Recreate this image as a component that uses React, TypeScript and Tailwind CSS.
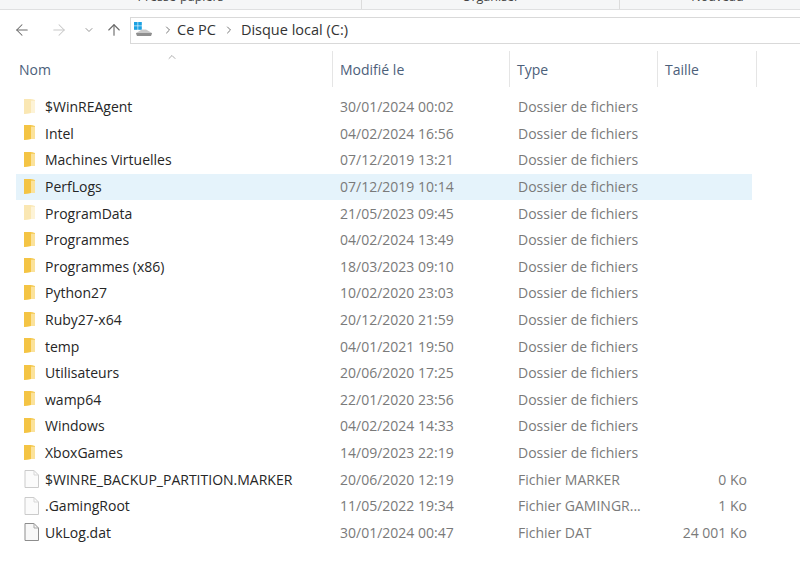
import React from 'react';
import { ArrowLeft, ArrowRight, ArrowUp, ChevronDown, ChevronRight, ChevronUp } from 'lucide-react';

type Row = { name: string; date: string; type: string; size?: string; faded?: boolean; selected?: boolean; file?: boolean };

const rows: Row[] = [
  { name: '$WinREAgent', date: '30/01/2024 00:02', type: 'Dossier de fichiers', faded: true },
  { name: 'Intel', date: '04/02/2024 16:56', type: 'Dossier de fichiers' },
  { name: 'Machines Virtuelles', date: '07/12/2019 13:21', type: 'Dossier de fichiers' },
  { name: 'PerfLogs', date: '07/12/2019 10:14', type: 'Dossier de fichiers', selected: true },
  { name: 'ProgramData', date: '21/05/2023 09:45', type: 'Dossier de fichiers', faded: true },
  { name: 'Programmes', date: '04/02/2024 13:49', type: 'Dossier de fichiers' },
  { name: 'Programmes (x86)', date: '18/03/2023 09:10', type: 'Dossier de fichiers' },
  { name: 'Python27', date: '10/02/2020 23:03', type: 'Dossier de fichiers' },
  { name: 'Ruby27-x64', date: '20/12/2020 21:59', type: 'Dossier de fichiers' },
  { name: 'temp', date: '04/01/2021 19:50', type: 'Dossier de fichiers' },
  { name: 'Utilisateurs', date: '20/06/2020 17:25', type: 'Dossier de fichiers' },
  { name: 'wamp64', date: '22/01/2020 23:56', type: 'Dossier de fichiers' },
  { name: 'Windows', date: '04/02/2024 14:33', type: 'Dossier de fichiers' },
  { name: 'XboxGames', date: '14/09/2023 22:19', type: 'Dossier de fichiers' },
  { name: '$WINRE_BACKUP_PARTITION.MARKER', date: '20/06/2020 12:19', type: 'Fichier MARKER', size: '0 Ko', file: true, faded: true },
  { name: '.GamingRoot', date: '11/05/2022 19:34', type: 'Fichier GAMINGR...', size: '1 Ko', file: true, faded: true },
  { name: 'UkLog.dat', date: '30/01/2024 00:47', type: 'Fichier DAT', size: '24 001 Ko', file: true },
];

const FolderIcon = ({ faded }: { faded?: boolean }) => (
  <svg width="12" height="16" viewBox="0 0 12 16" className={faded ? 'opacity-40' : ''}>
    <path d="M0 0 H8 L11 1 V14 H7 L0 15 Z" fill="#f6cf63" />
    <path d="M0 0 H7 V14 L0 15 Z" fill="#f4c444" />
    <path d="M7 2 H11 V14 H7 Z" fill="#fbe29a" />
  </svg>
);

const FileIcon = ({ faded }: { faded?: boolean }) => (
  <svg width="15" height="18" viewBox="0 0 15 18" className={faded ? 'opacity-45' : ''}>
    <path d="M1 .5 H10 L14.5 5 V17.5 H1 Z" fill="#f8f8f8" stroke="#8d8d8d" />
    <path d="M10 .5 V5 H14.5" fill="none" stroke="#a8a8a8" />
  </svg>
);

const DriveIcon = () => (
  <svg width="20" height="18" viewBox="0 0 20 18">
    <rect x="1" y="1" width="3.6" height="3.6" fill="#1ba1e2" />
    <rect x="5.2" y="1" width="3.6" height="3.6" fill="#1ba1e2" />
    <rect x="1" y="5.2" width="3.6" height="3.6" fill="#1ba1e2" />
    <rect x="5.2" y="5.2" width="3.6" height="3.6" fill="#1ba1e2" />
    <path d="M3 12 L9 8.5 H13 L19 12 L18 15 H4 Z" fill="#c9c9c9" />
    <path d="M3 12 H19 L18 15 H4 Z" fill="#8f8f8f" />
  </svg>
);

const HeaderCell = ({ label, width, className = '' }: { label: string; width: string; className?: string }) => (
  <div className={`${width} h-[36px] border-r border-[#e5e5e5] flex items-center text-[14px] text-[#4c607a] ${className}`}>{label}</div>
);

export default function App() {
  return (
    <div className="w-[800px] h-[575px] bg-white overflow-hidden text-[14px]" style={{ fontFamily: '"Open Sans", "Liberation Sans", sans-serif' }}>
      <div className="h-[10px] bg-[#f5f6f7] border-b border-[#dfe0e1] overflow-hidden flex text-[12.5px] text-[#444]">
        <div className="w-[362px] shrink-0 border-r border-[#dcdcdc] flex justify-center"><span className="-mt-[12px] leading-[18px]">Presse-papiers</span></div>
        <div className="w-[258px] shrink-0 border-r border-[#dcdcdc] flex justify-center"><span className="-mt-[12px] leading-[18px]">Organiser</span></div>
        <div className="w-[195px] shrink-0 flex justify-center"><span className="-mt-[12px] leading-[18px]">Nouveau</span></div>
      </div>

      <div className="h-[40px] flex items-center">
        <div className="w-[130px] flex items-center pl-[13px]">
          <ArrowLeft size={18} strokeWidth={1.4} color="#6a6a6a" />
          <ArrowRight size={18} strokeWidth={1.4} color="#c8c8c8" className="ml-[19px]" />
          <ChevronDown size={12} strokeWidth={1.6} color="#7a7a7a" className="ml-[15px]" />
          <ArrowUp size={18} strokeWidth={1.5} color="#6a6a6a" className="ml-[10px]" />
        </div>
        <div className="flex-1 h-[27px] border border-[#d9d9d9] border-r-0 flex items-center pl-[2px] text-[14.5px] text-[#333]">
          <DriveIcon />
          <ChevronRight size={12} strokeWidth={2} color="#777" className="ml-[9px]" />
          <span className="ml-[3px]">Ce PC</span>
          <ChevronRight size={12} strokeWidth={2} color="#777" className="ml-[7px]" />
          <span className="ml-[6px]">Disque local (C:)</span>
        </div>
      </div>

      <div className="relative flex h-[36px] mt-[1px]">
        <ChevronUp size={12} strokeWidth={1.4} color="#8a8a8a" className="absolute left-[166px] top-[0px]" />
        <HeaderCell label="Nom" width="w-[333px]" className="pl-[19px]" />
        <HeaderCell label="Modifié le" width="w-[177px]" className="pl-[7px]" />
        <HeaderCell label="Type" width="w-[148px]" className="pl-[7px]" />
        <HeaderCell label="Taille" width="w-[99px]" className="pl-[7px]" />
      </div>

      <div className="w-[736px] ml-[16px] mt-[7px]">
        {rows.map(r => (
          <div key={r.name} className={`h-[26.6px] flex items-center pb-[1px] ${r.selected ? 'bg-[#e5f3fb]' : ''}`}>
            <div className="w-[29px] pl-[8px] flex items-center"><span className="flex">{r.file ? <FileIcon faded={r.faded} /> : <FolderIcon faded={r.faded} />}</span></div>
            <div className="w-[295px] text-[#262626] whitespace-nowrap">{r.name}</div>
            <div className="w-[178px] text-[#7a7a7a]">{r.date}</div>
            <div className="w-[130px] text-[#7a7a7a] whitespace-nowrap">{r.type}</div>
            <div className="w-[99px] text-[#7a7a7a] text-right">{r.size}</div>
          </div>
        ))}
      </div>
    </div>
  );
}
